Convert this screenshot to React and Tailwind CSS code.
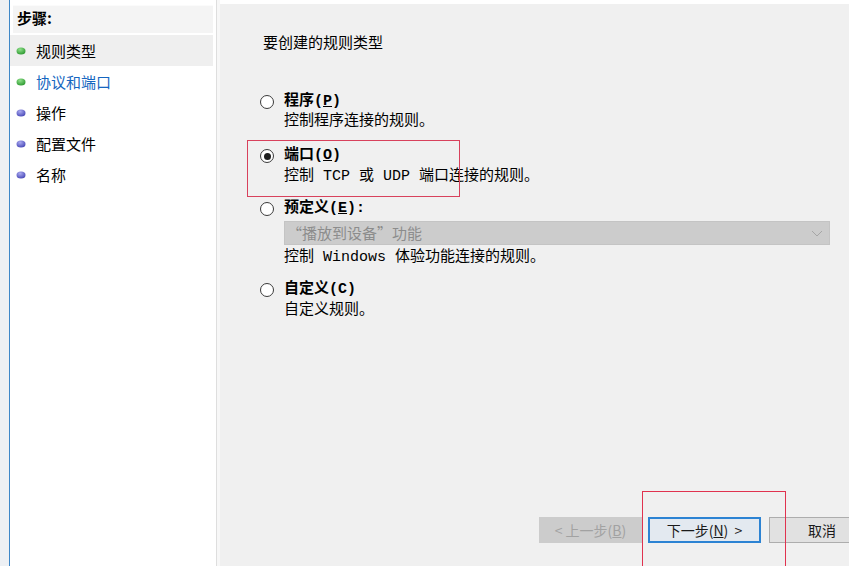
import React from "react";

const cjk = "font-['Noto_Sans_CJK_SC',sans-serif]";
const mono = "font-['Liberation_Mono','Noto_Sans_CJK_SC',monospace]";

function Bullet({ color }) {
  const id = color === "green" ? "gB" : "pB";
  const c1 = color === "green" ? "#8fe08a" : "#a9a9f0";
  const c2 = color === "green" ? "#2f9a32" : "#4b4bb8";
  return (
    <svg width="10" height="8" viewBox="0 0 10 8" className="flex-none">
      <defs>
        <radialGradient id={id} cx="0.4" cy="0.3" r="0.7">
          <stop offset="0" stopColor={c1} />
          <stop offset="1" stopColor={c2} />
        </radialGradient>
      </defs>
      <ellipse cx="5" cy="4" rx="4.5" ry="3.6" fill={`url(#${id})`} />
    </svg>
  );
}

function Step({ label, color, active, blue }) {
  return (
    <div
      className={`h-[31px] flex items-center pl-[6px] ${active ? "bg-[#efefef]" : ""}`}
    >
      <Bullet color={color} />
      <span
        className={`ml-[10px] text-[15px] leading-[20px] ${cjk} ${
          blue ? "text-[#1566c0]" : "text-black"
        }`}
      >
        {label}
      </span>
    </div>
  );
}

function Radio({ checked }) {
  return (
    <span className="flex-none w-[14px] h-[14px] rounded-full border-[1.5px] border-[#3a3a3a] bg-white flex items-center justify-center">
      {checked && <span className="w-[7px] h-[7px] rounded-full bg-[#1e1e1e]" />}
    </span>
  );
}

function Option({ checked, name, acc, underline = true, colon, className = "" }) {
  return (
    <div className={`flex items-center h-[20px] ${className}`}>
      <Radio checked={checked} />
      <span className={`ml-[10px] text-[15px] leading-[20px] font-bold text-black ${mono}`}>
        {name}(<span className={underline ? "underline" : ""}>{acc}</span>){colon ? ":" : ""}
      </span>
    </div>
  );
}

function Desc({ children, className = "" }) {
  return (
    <div className={`pl-[24px] h-[19px] text-[15px] leading-[19px] text-black whitespace-pre ${mono} ${className}`}>
      {children}
    </div>
  );
}

export default function App() {
  return (
    <div className="relative w-[849px] h-[566px] overflow-hidden flex bg-[#f0f0f0]">
      <div className="w-[9px] flex-none bg-[#edf0f4]" />
      <aside className="w-[207px] flex-none bg-white border-l border-[#3d87c8] flex flex-col">
        <div className="h-[5px]" />
        <div className="h-[28px] ml-[3px] mr-[3px] bg-[#f4f4f4] border-t border-[#fbfbfb] flex items-center pl-[4px] pb-[3px]">
          <span className={`text-[15px] leading-[20px] font-bold text-black ${cjk}`}>步骤:</span>
        </div>
        <div className="h-[2px]" />
        <div className="mr-[3px] flex flex-col">
          <Step label="规则类型" color="green" active />
          <Step label="协议和端口" color="green" blue />
          <Step label="操作" color="purple" />
          <Step label="配置文件" color="purple" />
          <Step label="名称" color="purple" />
        </div>
      </aside>
      <div className="w-[4px] flex-none border-l border-[#dedede] bg-[#f7f7f7]" />
      <main className="flex-1 min-w-0 flex flex-col border-t-4 border-white">
        <div className="pl-[40px] pt-[28px] flex flex-col">
          <div className={`pl-[3px] h-[20px] text-[15px] leading-[20px] text-black ${cjk}`}>
            要创建的规则类型
          </div>

          <Option name="程序" acc="P" className="mt-[40px]" />
          <Desc>控制程序连接的规则。</Desc>

          <Option checked name="端口" acc="O" className="mt-[15px]" />
          <Desc className="mt-[1px]">控制 TCP 或 UDP 端口连接的规则。</Desc>

          <Option name="预定义" acc="E" colon className="mt-[13px]" />
          <div className="ml-[24px] mt-[2px] w-[546px] h-[24px] bg-[#cccccc] border border-[#c4c4c4] flex items-center justify-between pl-[2px] pr-[6px]">
            <span className={`text-[15px] leading-[20px] text-[#8c8c8c] ${cjk}`}>“播放到设备”功能</span>
            <svg width="12" height="7" viewBox="0 0 12 7">
              <path d="M1 1 L6 6 L11 1" fill="none" stroke="#a6a6a6" strokeWidth="1" />
            </svg>
          </div>
          <Desc className="mt-[3px]">控制 Windows 体验功能连接的规则。</Desc>

          <Option name="自定义" acc="C" underline={false} className="mt-[13px]" />
          <Desc className="mt-[1px]">自定义规则。</Desc>
        </div>

        <div className="mt-auto mb-[23px] ml-[319px] flex items-center">
          <div className={`flex-none w-[103px] h-[26px] bg-[#cccccc] flex items-center justify-center text-[14px] text-[#a2a2a2] ${cjk}`}>
            &lt;&nbsp;上一步(<span className="underline">B</span>)
          </div>
          <div className={`flex-none ml-[6px] w-[113px] h-[26px] bg-[#e3e9f0] border-2 border-[#2c83d3] flex items-center justify-center text-[14px] text-[#1a1a1a] ${cjk}`}>
            下一步(<span className="underline">N</span>)&nbsp;&nbsp;&gt;
          </div>
          <div className={`flex-none ml-[8px] w-[106px] h-[26px] bg-[#e1e1e1] border border-[#adadad] flex items-center justify-center text-[14px] text-[#1a1a1a] ${cjk}`}>
            取消
          </div>
        </div>
      </main>

      <div className="absolute left-[247px] top-[140px] w-[213px] h-[57px] border border-[#d8415c] pointer-events-none" />
      <div className="absolute left-[642px] top-[491px] w-[144px] h-[90px] border border-[#e0324f] pointer-events-none" />
    </div>
  );
}
